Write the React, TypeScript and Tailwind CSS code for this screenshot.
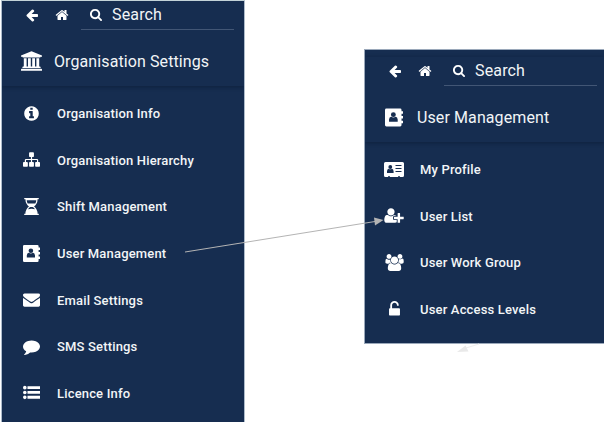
import type { ReactNode } from 'react';

type IconProps = { className: string };

function Glyph({ d, box = '0 0 1792 1792', className }: { d: string; box?: string; className: string }) {
  return (
    <svg viewBox={box} className={className} fill="white" fillRule="evenodd" aria-hidden="true">
      <path d={d} />
    </svg>
  );
}

const paths = {
  arrow: 'M1664 896v128q0 53-32.5 90.5t-84.5 37.5h-704l293 294q38 36 38 90t-38 90l-75 76q-37 37-90 37-52 0-91-37l-651-652q-37-37-37-90 0-52 37-91l651-650q38-38 91-38 52 0 90 38l75 74q38 38 38 91t-38 91l-293 293h704q52 0 84.5 37.5t32.5 90.5z',
  home: 'M1472 992v480q0 26-19 45t-45 19h-384v-384h-256v384h-384q-26 0-45-19t-19-45v-480q0-1 .5-3t.5-3l575-474 575 474q1 2 1 6zm223-69l-62 74q-8 9-21 11h-3q-13 0-21-7l-692-577-692 577q-12 8-24 7-13-2-21-11l-62-74q-8-10-7-23.5t11-21.5l719-599q32-26 76-26t76 26l244 204v-195q0-14 9-23t23-9h192q14 0 23 9t9 23v408l219 182q10 8 11 21.5t-7 23.5z',
  search: 'M1216 832q0-185-131.5-316.5t-316.5-131.5-316.5 131.5-131.5 316.5 131.5 316.5 316.5 131.5 316.5-131.5 131.5-316.5zm512 832q0 52-38 90t-90 38q-54 0-90-38l-343-342q-179 124-399 124-143 0-273.5-55.5t-225-150-150-225-55.5-273.5 55.5-273.5 150-225 225-150 273.5-55.5 273.5 55.5 225 150 150 225 55.5 273.5q0 220-124 399l343 343q37 37 37 90z',
  university: 'M832 0l960 384v128h-128q0 26-20.5 45t-48.5 19h-1526q-28 0-48.5-19t-20.5-45h-128v-128zm-704 640h256v768h128v-768h256v768h128v-768h256v768h128v-768h256v768h59q28 0 48.5 19t20.5 45v64h-1664v-64q0-26 20.5-45t48.5-19h59zm1595 960q28 0 48.5 19t20.5 45v128h-1920v-128q0-26 20.5-45t48.5-19z',
  info: 'M1152 1376v-160q0-14-9-23t-23-9h-96v-512q0-14-9-23t-23-9h-320q-14 0-23 9t-9 23v160q0 14 9 23t23 9h96v320h-96q-14 0-23 9t-9 23v160q0 14 9 23t23 9h448q14 0 23-9t9-23zm-128-896v-160q0-14-9-23t-23-9h-192q-14 0-23 9t-9 23v160q0 14 9 23t23 9h192q14 0 23-9t9-23zm640 416q0 209-103 385.5t-279.5 279.5-385.5 103-385.5-103-279.5-279.5-103-385.5 103-385.5 279.5-279.5 385.5-103 385.5 103 279.5 279.5 103 385.5z',
  sitemap: 'M1792 1248v320q0 40-28 68t-68 28h-320q-40 0-68-28t-28-68v-320q0-40 28-68t68-28h96v-192h-512v192h96q40 0 68 28t28 68v320q0 40-28 68t-68 28h-320q-40 0-68-28t-28-68v-320q0-40 28-68t68-28h96v-192h-512v192h96q40 0 68 28t28 68v320q0 40-28 68t-68 28h-320q-40 0-68-28t-28-68v-320q0-40 28-68t68-28h96v-192q0-52 38-90t90-38h512v-192h-96q-40 0-68-28t-28-68v-320q0-40 28-68t68-28h320q40 0 68 28t28 68v320q0 40-28 68t-68 28h-96v192h512q52 0 90 38t38 90v192h96q40 0 68 28t28 68z',
  envelope: 'M1792 710v794q0 66-47 113t-113 47h-1472q-66 0-113-47t-47-113v-794q44 49 101 87 362 246 497 345 57 42 92.5 65.5t94.5 48 110 24.5h2q51 0 110-24.5t94.5-48 92.5-65.5q170-123 498-345 57-39 100-87zm0-294q0 79-49 151t-122 123q-376 261-468 325-10 7-42.5 31t-54 38.5-52 32.5-57.5 27-50 9h-2q-23 0-50-9t-57.5-27-52-32.5-54-38.5-42.5-31q-91-64-262-182.5t-205-142.5q-62-42-117-115.5t-55-136.5q0-78 41.5-130t118.5-52h1472q65 0 112.5 47t47.5 113z',
  comment: 'M1792 896q0 174-120 321.5t-326 233-450 85.5q-70 0-145-8-198 175-460 242-49 14-114 22-17 2-30.5-9t-17.5-29v-1q-3-4-.5-12t2-10 4.5-9.5l6-9 7-8.5 8-9q7-8 31-34.5t34.5-38 31-39.5 32.5-51 27-59 26-76q-157-89-247.5-220t-90.5-281q0-130 71-248.5t191-204.5 286-136.5 348-50.5q244 0 450 85.5t326 233 120 321.5z',
  list: 'M192 192a192 192 0 1 0 0 384 192 192 0 1 0 0-384zM192 704a192 192 0 1 0 0 384 192 192 0 1 0 0-384zM192 1216a192 192 0 1 0 0 384 192 192 0 1 0 0-384zM470 230h1322v300H470zM470 740h1322v300H470zM470 1250h1322v300H470z',
  hourglass: 'M1408 128q0 261-106.5 461.5t-266.5 306.5q160 106 266.5 306.5t106.5 461.5h96q14 0 23 9t9 23v64q0 14-9 23t-23 9h-1472q-14 0-23-9t-9-23v-64q0-14 9-23t23-9h96q0-261 106.500-461.500t266.500-306.500q-160-106-266.500-306.500t-106.500-461.500h-96q-14 0-23-9t-9-23v-64q0-14 9-23t23-9h1472q14 0 23 9t9 23v64q0 14-9 23t-23 9zM262 230q16 190 104 350h804q88-160 104-350zM653 961q-150 65-245 235l180-40q180-30 360 0l180 40q-95-170-245-235z',
  userPlus: 'M704 896q-159 0-271.5-112.5t-112.5-271.5 112.5-271.5 271.5-112.5 271.5 112.5 112.5 271.5-112.5 271.5-271.5 112.5zm960 128h352q13 0 22.5 9.5t9.5 22.5v192q0 13-9.5 22.5t-22.5 9.5h-352v352q0 13-9.5 22.5t-22.5 9.5h-192q-13 0-22.5-9.5t-9.5-22.5v-352h-352q-13 0-22.5-9.5t-9.5-22.5v-192q0-13 9.5-22.5t22.5-9.5h352v-352q0-13 9.5-22.5t22.5-9.5h192q13 0 22.5 9.5t9.5 22.5v352zm-736 224q0 52 38 90t90 38h256v238q-68 50-171 50h-874q-121 0-194-69t-73-190q0-53 3.5-103.5t14-109 26.5-108.5 43-97.5 62-81 85.5-53.5 111.5-20q19 0 39 17 79 61 154.5 91.5t164.5 30.5 164.5-30.5 154.5-91.5q20-17 39-17 132 0 217 96h-223q-52 0-90 38t-38 90v192z',
  users: 'M657 896q-162 5-265 128h-134q-82 0-138-40.5t-56-118.5q0-353 124-353 6 0 43.5 21t97.5 42.5 119 21.5q67 0 133-23-5 37-5 66 0 159 93 293zm1071 637q0 120-73 189.5t-194 69.5h-874q-121 0-194-69.5t-73-189.5q0-53 3.5-103.5t14-109 26.5-108.5 43-97.5 62-81 85.5-53.5 111.5-20q10 0 43 21.5t73 48 107 48 135 21.5 135-21.5 107-48 73-48 43-21.5q61 0 111.5 20t85.5 53.5 62 81 43 97.5 26.5 108.5 14 109 3.5 103.5zm-1024-1277q0 106-75 181t-181 75-181-75-75-181 75-181 181-75 181 75 75 181zm704 384q0 159-112.5 271.5t-271.5 112.5-271.5-112.5-112.5-271.5 112.5-271.5 271.5-112.5 271.5 112.5 112.5 271.5zm576 225q0 78-56 118.5t-138 40.5h-134q-103-123-265-128 93-134 93-293 0-29-5-66 66 23 133 23 59 0 119-21.5t97.5-42.5 43.5-21q124 0 124 353zm-128-609q0 106-75 181t-181 75-181-75-75-181 75-181 181-75 181 75 75 181z',
  unlock: 'M1376 768q40 0 68 28t28 68v576q0 40-28 68t-68 28h-960q-40 0-68-28t-28-68v-576q0-40 28-68t68-28h32v-320q0-185 131.5-316.5t316.5-131.5 316.5 131.5 131.5 316.5q0 26-19 45t-45 19h-64q-26 0-45-19t-19-45q0-106-75-181t-181-75-181 75-75 181v320h736z',
};

function AddressBook({ className }: IconProps) {
  return (
    <svg viewBox="0 0 17 17" className={className} aria-hidden="true">
      <path fill="white" d="M1.300 0h13Q15.600 0 15.600 1.300V2.500H17V5h-1.400v2H17v2.500h-1.400v2H17V14h-1.400v1.700Q15.600 17 14.300 17h-13Q0 17 0 15.700V1.300Q0 0 1.300 0z" />
      <g fill="#162d50">
        <circle cx="7.900" cy="5.800" r="2.300" />
        <path d="M3.800 12.500V10.500Q4 7.800 5.800 7.700q2.100 1.400 4.200 0Q11.800 7.800 12 10.500v2z" />
      </g>
    </svg>
  );
}

function IdCard({ className }: IconProps) {
  return (
    <svg viewBox="0 0 20 15" className={className} aria-hidden="true">
      <path fill="white" d="M1.500 0h17Q20 0 20 1.500v12q0 1.500-1.500 1.500H16v-.7h-2v.7H6v-.7H4v.7H1.500Q0 15 0 13.500v-12Q0 0 1.500 0z" />
      <g fill="#162d50">
        <circle cx="6.300" cy="5" r="1.900" />
        <path d="M3 11V9.200Q3.200 7 4.600 6.700q1.700 1.300 3.400 0Q9.400 7 9.600 9.200V11zM11.500 3H17.500v1h-6zM11.500 6H17.500v1h-6zM11.500 9H17.500v1h-6z" />
      </g>
    </svg>
  );
}

function Header({ icon, title }: { icon: ReactNode; title: string }) {
  return (
    <header className="h-[85px] shrink-0 pl-[18px] shadow-[0_1px_4px_rgba(5,18,38,0.45)]">
      <div className="flex h-[30px] items-start">
        <Glyph d={paths.arrow} className="mt-[7px] ml-[5px] h-[14px] w-[14px]" />
        <Glyph d={paths.home} className="mt-[7px] ml-[16px] h-[14px] w-[14px]" />
        <div className="ml-[12px] flex h-[29px] w-[153px] items-start border-b border-[#425675] pl-[8px]">
          <Glyph d={paths.search} className="mt-[7px] h-[13px] w-[14px]" />
          <span className="mt-[2px] ml-[9px] text-[16px] leading-6 tracking-[0.15px]">Search</span>
        </div>
      </div>
      <div className="flex h-[62px] items-center">
        <span className="mb-[2px] flex w-[22px] justify-center">{icon}</span>
        <h1 className="ml-[12px] text-[16px] leading-6 tracking-[0.1px] whitespace-nowrap">{title}</h1>
      </div>
    </header>
  );
}

function Item({ icon, label }: { icon: ReactNode; label: string }) {
  return (
    <li className="flex h-[46.6px] items-center pl-[18px]">
      <span className="mb-[2px] flex w-[22px] justify-center">{icon}</span>
      <span className="ml-[15px] text-[13px] leading-5 font-medium tracking-[0.17px] whitespace-nowrap">{label}</span>
    </li>
  );
}

export default function App() {
  return (
    <main className="relative h-[422px] w-[604px] overflow-hidden bg-white font-['Roboto',sans-serif] text-[#f2f5f7]">
      <div className="flex items-start">
        <aside className="ml-px h-[422px] w-[244px] shrink-0 overflow-hidden border-x border-t border-x-[#aebccb] border-t-[#c3d3d8] bg-[#162d50]">
          <Header
            icon={<Glyph d={paths.university} box="-128 0 1920 1792" className="h-[20px] w-[21px]" />}
            title="Organisation Settings"
          />
          <ul className="pt-[5px]">
            <Item icon={<Glyph d={paths.info} className="h-[17px] w-[17px]" />} label="Organisation Info" />
            <Item icon={<Glyph d={paths.sitemap} className="h-[17px] w-[17px]" />} label="Organisation Hierarchy" />
            <Item icon={<Glyph d={paths.hourglass} box="0 0 1536 1792" className="h-[17px] w-[15px]" />} label="Shift Management" />
            <Item icon={<AddressBook className="h-[17px] w-[17px]" />} label="User Management" />
            <Item icon={<Glyph d={paths.envelope} className="h-[17px] w-[17px]" />} label="Email Settings" />
            <Item icon={<Glyph d={paths.comment} className="h-[17px] w-[17px]" />} label="SMS Settings" />
            <Item icon={<Glyph d={paths.list} className="h-[17px] w-[17px]" />} label="Licence Info" />
          </ul>
        </aside>
        <aside className="mt-[49px] ml-[119px] h-[295px] w-[240px] shrink-0 overflow-hidden border-y border-l border-[#9aa8ba] bg-[#162d50] pt-[7px]">
          <Header icon={<AddressBook className="h-[19px] w-[18px]" />} title="User Management" />
          <ul className="pt-[5px]">
            <Item icon={<IdCard className="h-[15px] w-[20px]" />} label="My Profile" />
            <Item icon={<Glyph d={paths.userPlus} box="0 0 2048 1792" className="h-[17px] w-[20px]" />} label="User List" />
            <Item icon={<Glyph d={paths.users} box="64 0 1920 1792" className="h-[17px] w-[19px]" />} label="User Work Group" />
            <Item icon={<Glyph d={paths.unlock} className="h-[17px] w-[17px]" />} label="User Access Levels" />
          </ul>
        </aside>
      </div>
      <svg className="pointer-events-none absolute inset-0 h-[422px] w-[604px]" viewBox="0 0 604 422" aria-hidden="true">
        <path d="M185 252L375 221.500" stroke="#b4b4b4" strokeWidth="1" />
        <path d="M383.500 220L374 217.500L375 225.500Z" fill="#b4b4b4" />
        <path d="M466 348L479 344" stroke="#eeeeee" strokeWidth="1" />
        <path d="M457 352L465.500 345.500L468.500 351.500Z" fill="#e9e9e9" />
      </svg>
    </main>
  );
}
